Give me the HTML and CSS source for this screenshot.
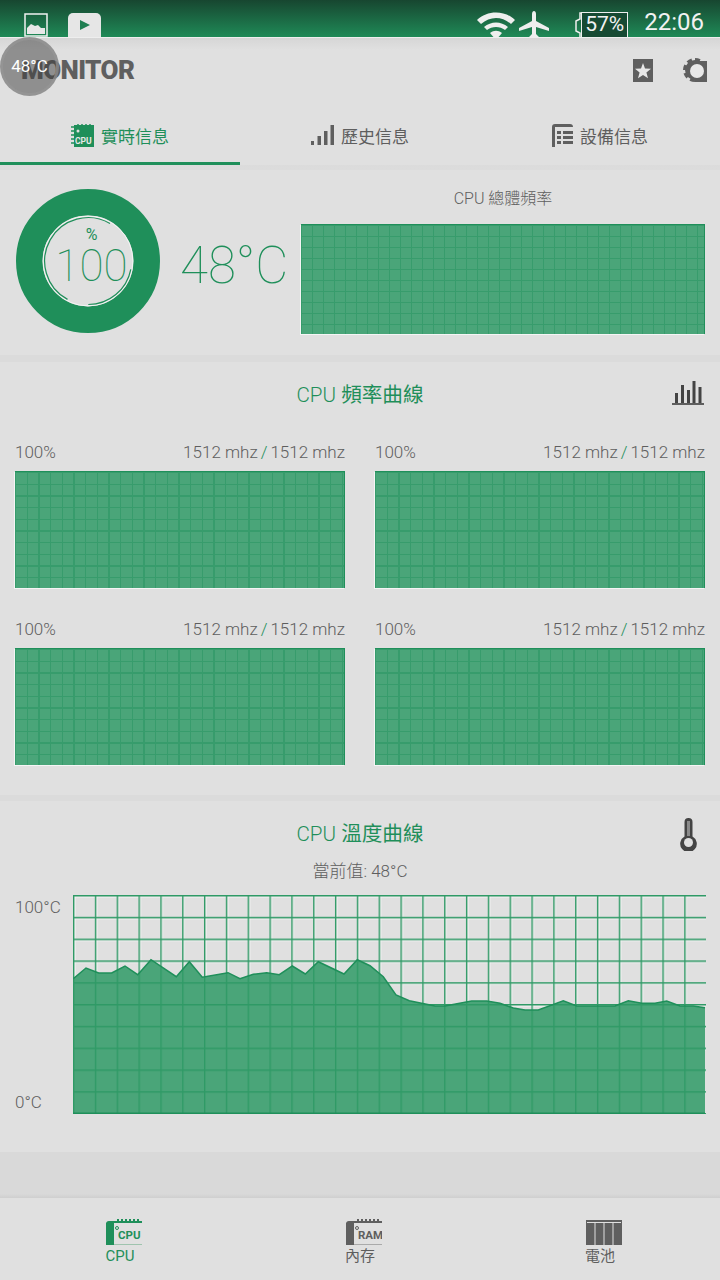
FILE: index.html
```html
<!DOCTYPE html>
<html lang="zh-Hant">
<head>
  <meta charset="UTF-8" />
  <meta name="viewport" content="width=device-width, initial-scale=1.0"/>
  <title>Monitor</title>
  <link rel="stylesheet" href="styles.css">
</head>
<body>

<!-- Status bar -->
<div class="status-bar">
  <div class="status-left">
    <svg class="status-pic" width="24" height="24" viewBox="0 0 24 24">
      <rect x="1" y="1" width="22" height="22" fill="none" stroke="#f1f1f1" stroke-width="1.5"/>
      <path d="M3 21v-6l4-4 4 2 3-1 3 3 4 0v6z" fill="#e8e8e8"/>
    </svg>
    <svg class="status-play" width="33" height="24" viewBox="0 0 33 24">
      <path d="M5 0h23a5 5 0 0 1 5 5v19H0V5a5 5 0 0 1 5-5z" fill="#e6e6e6"/>
      <path d="M12 7l10 5-10 5z" fill="#1f7f52"/>
    </svg>
  </div>
  <div class="status-right">
    <svg width="40" height="30" viewBox="0 0 40 30">
      <path d="M1 9C11-1 29-1 39 9l-4 4C26 5 14 5 5 13z" fill="#eee"/>
      <path d="M8 16c7-6 17-6 24 0l-3 3c-5-4-13-4-18 0z" fill="#eee"/>
      <path d="M14 22c4-3 8-3 12 0l-6 7z" fill="#eee"/>
    </svg>
    <svg class="status-plane" width="30" height="30" viewBox="0 0 30 30">
      <path d="M13 4c0-4 4-4 4 0v7l13 7v3l-13-4v7l3 3v3l-5-1-5 1v-3l3-3v-7L0 21v-3l13-7z" fill="#eee"/>
    </svg>
    <div class="battery">
      <svg class="battery-cap" width="8" height="26" viewBox="0 0 8 26">
        <path d="M7 1H5v6L1 9v10l4 2v5" fill="none" stroke="#eee" stroke-width="1.500"/>
      </svg>
      57%
    </div>
    <div class="clock">22:06</div>
  </div>
</div>

<!-- Title -->
<header>
  <h1>MONITOR</h1>
  <div class="header-icons">
    <svg width="20" height="23" viewBox="0 0 20 23">
      <rect width="20" height="23" fill="#5f5f5f"/>
      <path d="M10 4l2 5.500 6 .3-4.600 3.700 1.600 5.700-5-3.200-5 3.200 1.600-5.700L2 9.800l6-.3z" fill="#e8e8e8"/>
    </svg>
    <svg width="24" height="24" viewBox="0 0 24 24">
      <circle cx="12" cy="12" r="10.500" fill="none" stroke="#5f5f5f" stroke-width="3" stroke-dasharray="5 3.200"/>
      <circle cx="12" cy="12" r="10" fill="#5f5f5f"/>
      <path d="M12 3h12v21H12z" fill="#5f5f5f"/>
      <circle cx="14" cy="13" r="7" fill="#e8e8e8"/>
    </svg>
  </div>
</header>

<!-- Floating temperature -->
<div class="bubble">48°C</div>

<nav class="tabs">
  <div class="tab active">
    <svg width="23" height="23" viewBox="0 0 23 23">
      <path d="M3 1h20v22H3z" fill="#1f8f5a"/>
      <path d="M0 3h3M0 7h3M0 11h3M0 15h3M0 19h3M7 0v3M11 0v3M15 0v3M19 0v3" stroke="#1f8f5a" stroke-width="1.500"/>
      <circle cx="7" cy="7" r="1.500" fill="#e0e0e0"/>
      <text x="4" y="20" class="chip-text">CPU</text>
    </svg>
    <span>實時信息</span>
  </div>
  <div class="tab">
    <svg width="23" height="20" viewBox="0 0 23 20">
      <path d="M0 16h3v4H0zM6.500 11h3.500v9H6.500zM13 6h3.500v14H13zM19.500 0H23v20h-3.500z" fill="#5f5f5f"/>
    </svg>
    <span>歷史信息</span>
  </div>
  <div class="tab">
    <svg width="21" height="23" viewBox="0 0 21 23">
      <path d="M3 0h15a3 3 0 0 1 3 3H3v20H0V3a3 3 0 0 1 3-3z" fill="#5f5f5f"/>
      <path d="M5 7h4v3H5zM11 7h10v3H11zM5 12h4v3H5zM11 12h10v3H11zM5 17h4v3H5zM11 17h10v3H11z" fill="#5f5f5f"/>
    </svg>
    <span>設備信息</span>
  </div>
</nav>

<!-- Live summary -->
<section class="summary">
  <div class="gauge">
    <svg width="146" height="146" viewBox="-73 -73 146 146">
      <circle r="58.700" fill="none" stroke="#1f8f5a" stroke-width="26.600"/>
      <circle r="44.900" fill="none" stroke="#f4f4f4" stroke-width="1"/>
      <path d="M22-37.500A43.500 43.500 0 1 0-20.500 38.400" fill="none" stroke="#1f8f5a" stroke-width="1.200"/>
      <path d="M.3 43.500A43.500 43.500 0 0 0 42.800 8.300" fill="none" stroke="#1f8f5a" stroke-width="1.200"/>
    </svg>
    <div class="gauge-text">
      <div class="gauge-unit">%</div>
      <div class="gauge-value">100</div>
    </div>
  </div>
  <div class="temp">48°C</div>
  <div class="total">
    <div class="total-label">CPU 總體頻率</div>
    <div class="chart chart-total"></div>
  </div>
</section>

<div class="divider"></div>

<!-- Frequency per core -->
<section class="freq">
  <div class="title-row">
    <h2><span>CPU</span> 頻率曲線</h2>
    <svg class="title-icon" width="32" height="24" viewBox="0 0 32 24">
      <path d="M0 23h32" stroke="#333" stroke-width="1.500"/>
      <path d="M3 12h3v10H3zM9 4h3v18H9zM15 9h3v13h-3zM20.500 0h3v22h-3zM26.500 6h3v16h-3z" fill="#444"/>
    </svg>
  </div>
  <div class="core-grid">
    <div class="core">
      <div class="core-info"><span>100%</span><span>1512 mhz<i>/</i>1512 mhz</span></div>
      <div class="chart chart-core"></div>
    </div>
    <div class="core">
      <div class="core-info"><span>100%</span><span>1512 mhz<i>/</i>1512 mhz</span></div>
      <div class="chart chart-core"></div>
    </div>
    <div class="core">
      <div class="core-info"><span>100%</span><span>1512 mhz<i>/</i>1512 mhz</span></div>
      <div class="chart chart-core"></div>
    </div>
    <div class="core">
      <div class="core-info"><span>100%</span><span>1512 mhz<i>/</i>1512 mhz</span></div>
      <div class="chart chart-core"></div>
    </div>
  </div>
</section>

<div class="divider divider-thin"></div>

<!-- Temperature curve -->
<section class="heat">
  <div class="title-row">
    <h2><span>CPU</span> 溫度曲線</h2>
    <svg class="title-icon thermo" width="17" height="33" viewBox="0 0 17 33">
      <path d="M4.500 4a4 4 0 0 1 8 0v14.500a8.300 8.300 0 1 1-8 0z" fill="#444"/>
      <rect x="7" y="3" width="3" height="15" fill="#8a8a8a"/>
      <circle cx="8.500" cy="24.500" r="4.500" fill="#e0e0e0"/>
    </svg>
  </div>
  <div class="heat-now">當前值: 48°C</div>
  <div class="heat-body">
    <div class="heat-axis"><span>100°C</span><span>0°C</span></div>
    <svg class="heat-chart" width="633" height="219" viewBox="0 0 633 219">
      <defs>
        <pattern id="cells" width="21.830" height="21.800" patternUnits="userSpaceOnUse">
          <path d="M.7 0v21.800M0 .7h21.830" fill="none" stroke="#2f9a66" stroke-width="1.400"/>
        </pattern>
        <pattern id="cells-halo" width="21.830" height="21.800" patternUnits="userSpaceOnUse">
          <path d="M2 0v21.800M0 2h21.830" fill="none" stroke="#f6f6f6" stroke-width="1"/>
        </pattern>
      </defs>
      <rect width="633" height="219" fill="url(#cells-halo)"/>
      <polygon class="heat-area" points="0.300,83.700 13,73 25.700,78 38.700,78 52,71 64.700,79.700 78,64.700 103.300,81.700 116.300,66.700 129.300,82.300 155,77.700 167,83.700 180.300,79.300 193.700,77.700 206.300,79.700 219.300,71 232.300,79 245.300,66.700 271,79 284.300,64.700 297,70.700 310.300,81.700 323,100 336.300,105.700 362,111 372,111 398.700,106 413.700,106 427,108.300 440.300,113 452,115 465.300,115 490.300,105.700 503.700,111 542,111 555.300,105.700 568.700,108.300 582,108.300 593.700,106 607,111 620.300,111 632,112.700 632,218 0.300,218"/>
      <rect width="633" height="219" fill="url(#cells)"/>
      <polyline class="heat-line" points="0.300,83.700 13,73 25.700,78 38.700,78 52,71 64.700,79.700 78,64.700 103.300,81.700 116.300,66.700 129.300,82.300 155,77.700 167,83.700 180.300,79.300 193.700,77.700 206.300,79.700 219.300,71 232.300,79 245.300,66.700 271,79 284.300,64.700 297,70.700 310.300,81.700 323,100 336.300,105.700 362,111 372,111 398.700,106 413.700,106 427,108.300 440.300,113 452,115 465.300,115 490.300,105.700 503.700,111 542,111 555.300,105.700 568.700,108.300 582,108.300 593.700,106 607,111 620.300,111 632,112.700"/>
      <path d="M0 218.300h632" stroke="#1f8f5a" stroke-width="1.500"/>
    </svg>
  </div>
</section>

<div class="band"></div>

<!-- Bottom navigation -->
<div class="bottom-nav">
  <div class="nav-item active">
    <svg width="36" height="26" viewBox="0 0 36 26">
      <path d="M0 4a3 3 0 0 1 3-2h33v2H8v22H0z" fill="#1f8f5a"/>
      <path d="M12 2V0M16 2V0M20 2V0M24 2V0M28 2V0M32 2V0" stroke="#1f8f5a" stroke-width="2"/>
      <path d="M8 25.500h28" stroke="#9fc4ae"/>
      <circle cx="11" cy="9" r="1.500" fill="none" stroke="#1f8f5a"/>
      <text x="12" y="19.500" class="nav-chip">CPU</text>
    </svg>
    <span>CPU</span>
  </div>
  <div class="nav-item">
    <svg width="36" height="26" viewBox="0 0 36 26">
      <path d="M0 4a3 3 0 0 1 3-2h33v2H8v22H0z" fill="#5f5f5f"/>
      <path d="M12 2V0M16 2V0M20 2V0M24 2V0M28 2V0M32 2V0" stroke="#5f5f5f" stroke-width="2"/>
      <path d="M8 25.500h28" stroke="#aaa"/>
      <circle cx="11" cy="9" r="1.500" fill="none" stroke="#5f5f5f"/>
      <text x="12" y="19.500" class="nav-chip">RAM</text>
    </svg>
    <span>內存</span>
  </div>
  <div class="nav-item">
    <svg width="36" height="26" viewBox="0 0 36 26">
      <rect y="1" width="36" height="25" fill="#5f5f5f"/>
      <path d="M1 3.500h34M9 3v23M18 3v23M27 3v23" stroke="#e0e0e0" stroke-width="1"/>
    </svg>
    <span>電池</span>
  </div>
</div>

</body>
</html>
```

FILE: styles.css
```css
:root {
  --green: #1f8f5a;
  --chart: #4aa579;
  --chart-line: #379c6c;
  --bg: #e0e0e0;
  --text: #5e5e5e;
  --icon: #5f5f5f;
}
* {
  margin: 0;
  padding: 0;
  box-sizing: border-box;
}
body {
  width: 720px;
  height: 1280px;
  display: flex;
  flex-direction: column;
  position: relative;
  overflow: hidden;
  background: var(--bg);
  color: var(--text);
  font-family: Roboto, "Noto Sans CJK TC", sans-serif;
}
.status-bar {
  height: 38px;
  flex: none;
  display: flex;
  justify-content: space-between;
  background: linear-gradient(#174630, #1f8a57);
  border-bottom: 1px solid #eee;
  color: #f2f2f2;
}
.status-left {
  display: flex;
  align-items: flex-end;
  gap: 20px;
  padding-left: 24px;
}
.status-right {
  display: flex;
  align-items: flex-end;
  padding-right: 16px;
}
.status-right > svg {
  margin-bottom: -4px;
  margin-right: 3px;
}
.status-right > .status-plane {
  margin-bottom: -3px;
  margin-right: 32px;
}
.battery {
  position: relative;
  width: 47px;
  height: 25px;
  margin-right: 16px;
  background: #164a33;
  border: 1.500px solid #eee;
  border-bottom: none;
  font-size: 21px;
  line-height: 23px;
  text-align: center;
}
.battery-cap {
  position: absolute;
  left: -7px;
  top: -1px;
}
.clock {
  font-size: 24px;
  line-height: 30px;
  font-weight: 400;
}
header {
  height: 72px;
  flex: none;
  display: flex;
  justify-content: space-between;
  align-items: center;
  padding: 0 13px 8px 21px;
  background: linear-gradient(#d6d6d6, var(--bg) 12px);
}
header h1 {
  font-size: 26px;
  font-weight: 900;
  color: var(--icon);
  letter-spacing: -0.6px;
}
.header-icons {
  display: flex;
  align-items: center;
  gap: 30px;
}
.bubble {
  position: absolute;
  left: 0;
  top: 37px;
  width: 59px;
  height: 59px;
  border-radius: 50%;
  border: 3px solid rgba(150, 150, 150, 0.7);
  background: rgba(62, 62, 62, 0.5);
  color: #fff;
  font-size: 17px;
  line-height: 53px;
  text-align: center;
}
.tabs {
  height: 60px;
  flex: none;
  display: flex;
  border-bottom: 5px solid;
  border-image: linear-gradient(#bdbdbd, #dcdcdc) 1;
}
.tab {
  flex: 1;
  display: flex;
  justify-content: center;
  align-items: center;
  gap: 7px;
  padding-bottom: 5px;
  font-size: 17px;
  color: var(--text);
}
.tab.active {
  color: var(--green);
  border-bottom: 3px solid var(--green);
  padding-bottom: 2px;
}
.chip-text {
  font-size: 8.500px;
  font-weight: 700;
  fill: #e8e8e8;
}
.summary {
  height: 185px;
  flex: none;
  display: flex;
  align-items: center;
  padding: 0 15px 3px;
}
.gauge {
  width: 146px;
  height: 146px;
  flex: none;
  position: relative;
}
.gauge-text {
  position: absolute;
  inset: 0;
  display: flex;
  flex-direction: column;
  align-items: center;
  padding: 37px 0 0 7px;
  color: var(--green);
}
.gauge-unit {
  font-size: 16px;
  line-height: 20px;
}
.gauge-value {
  font-size: 44px;
  font-weight: 100;
  line-height: 42px;
}
.temp {
  width: 140px;
  flex: none;
  margin-top: 9px;
  padding-left: 19px;
  font-size: 51px;
  font-weight: 100;
  color: var(--green);
  white-space: nowrap;
}
.total {
  flex: 1;
}
.total-label {
  font-size: 16px;
  font-weight: 300;
  line-height: 22px;
  text-align: center;
  margin-bottom: 14px;
}
.chart {
  background-color: var(--chart);
  border-top: 1px solid var(--green);
  border-right: 1px solid var(--green);
  box-shadow: -1px 1px 0 #f5f5f5;
}
.chart-total {
  height: 110px;
  background-image:
    repeating-linear-gradient(var(--chart-line) 0 1.400px, transparent 1.400px 11px),
    repeating-linear-gradient(90deg, var(--chart-line) 0 1.400px, transparent 1.400px 11px);
}
.chart-core {
  height: 117px;
  background-image:
    repeating-linear-gradient(var(--chart-line) 0 1.400px, transparent 1.400px 11.670px),
    repeating-linear-gradient(90deg, var(--chart-line) 0 1.400px, transparent 1.400px 11.670px);
}
.divider {
  height: 7px;
  flex: none;
  background: #dbdbdb;
}
.divider-thin {
  height: 6px;
}
.title-row {
  display: grid;
  grid-template-columns: 1fr auto 1fr;
  grid-template-rows: 26px;
  align-items: center;
}
.title-row h2 {
  grid-column: 2;
  font-size: 20.600px;
  font-weight: 400;
  color: var(--green);
}
.title-row h2 span {
  font-weight: 300;
}
.title-icon {
  justify-self: end;
  margin-right: 16px;
}
.thermo {
  margin-right: 23px;
  margin-top: 4px;
}
.freq {
  height: 433px;
  flex: none;
  padding-top: 18px;
}
.core-grid {
  display: grid;
  grid-template-columns: 1fr 1fr;
  column-gap: 30px;
  row-gap: 31px;
  padding: 36px 15px 0;
}
.core-info {
  display: flex;
  justify-content: space-between;
  font-size: 17px;
  font-weight: 300;
  line-height: 20px;
  margin-bottom: 9px;
}
.core-info i {
  font-style: normal;
  color: var(--green);
  margin: 0 3px;
}
.heat {
  height: 351px;
  flex: none;
  padding-top: 18px;
}
.heat-now {
  margin-top: 16px;
  font-size: 17px;
  font-weight: 300;
  line-height: 20px;
  text-align: center;
}
.heat-body {
  display: flex;
  margin-top: 14px;
  padding: 0 15px;
}
.heat-axis {
  width: 58px;
  flex: none;
  display: flex;
  flex-direction: column;
  justify-content: space-between;
  padding: 2px 0 2px;
  font-size: 17px;
  font-weight: 300;
  line-height: 20px;
}
.heat-chart {
  flex: none;
  display: block;
}
.heat-area {
  fill: var(--chart);
}
.heat-line {
  fill: none;
  stroke: var(--green);
  stroke-width: 1.500;
}
.band {
  flex: 1;
  background: linear-gradient(#d9d9d9 42px, #cfcfcf);
}
.bottom-nav {
  height: 82px;
  flex: none;
  display: flex;
  padding-top: 21px;
}
.nav-item {
  flex: 1;
  display: flex;
  flex-direction: column;
  align-items: center;
  font-size: 15px;
  line-height: 22px;
}
.nav-item svg {
  margin-left: 7px;
}
.nav-item.active {
  color: var(--green);
}
.nav-chip {
  font-size: 11.500px;
  font-weight: 700;
  fill: currentColor;
}
```
